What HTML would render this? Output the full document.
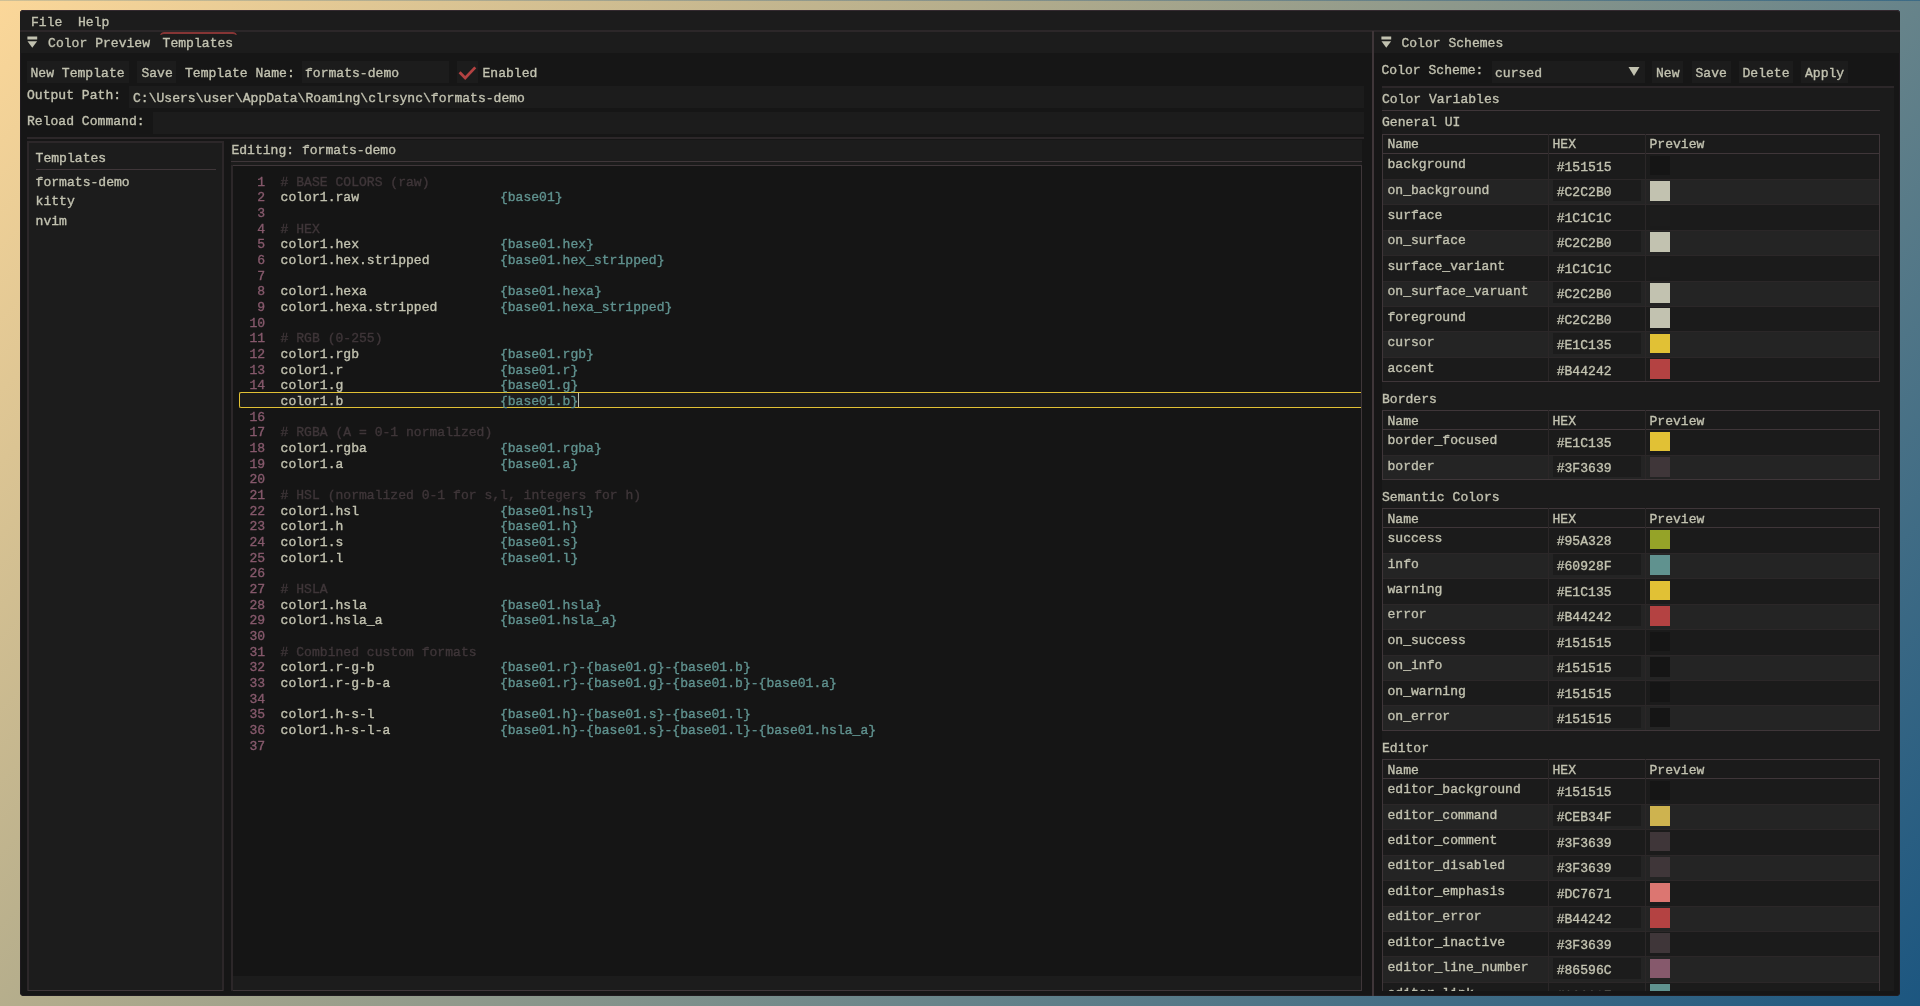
<!DOCTYPE html>
<html><head><meta charset="utf-8"><title>clrsync</title>
<style>
html,body{margin:0;padding:0;width:1920px;height:1006px;overflow:hidden;}
body{position:relative;background:linear-gradient(134deg,#FBD799 0%,#B6AE8C 33.3%,#66838A 66.7%,#1C5680 100%);}
.win{position:absolute;left:20px;top:10px;width:1880px;height:986px;background:#161616;border-radius:4px;box-shadow:inset 0 0 0 1px #1f1b1f;}
.r{position:absolute;}
.clip{position:absolute;overflow:hidden;}
.t{position:absolute;font-family:"Liberation Mono",monospace;font-size:13.07px;line-height:15px;white-space:pre;color:#C2C2B0;transform:scaleY(1.04);-webkit-text-stroke:0.35px currentColor;transform-origin:0 11px;}
</style></head><body>
<div class="r" style="left:0;top:0;width:1920px;height:1px;background:linear-gradient(90deg,#CFC096,#86928A 50%,#3D6B85)"></div>
<div class="win"></div>
<div class="r" style="left:20px;top:10px;width:1880px;height:21px;background:#1C1C1C;border-radius:4px 4px 0 0;box-shadow:inset 0 1px 0 #33292f;"></div>
<div class="t" style="left:31px;top:15px;color:#C2C2B0;">File</div>
<div class="t" style="left:78px;top:15px;color:#C2C2B0;">Help</div>
<div class="r" style="left:20px;top:30px;width:1880px;height:2px;background:#2c2729;"></div>
<div class="r" style="left:20px;top:32px;width:1352px;height:21px;background:#1C1C1C;"></div>
<div class="r" style="left:1374px;top:32px;width:526px;height:21px;background:#1C1C1C;"></div>
<svg class="r" style="left:27px;top:36px" width="12" height="13" viewBox="0 0 12 13"><rect x="0.4" y="0.5" width="9.8" height="3" fill="#C2C2B0"/><path d="M0.5 5.3 L10.1 5.3 L5.3 11.8 Z" fill="#C2C2B0"/></svg>
<div class="t" style="left:48.1px;top:36.2px;color:#C2C2B0;">Color Preview</div>
<div class="t" style="left:162.6px;top:36.2px;color:#C2C2B0;">Templates</div>
<div class="r" style="left:160px;top:32px;width:77px;height:5px;border-top:2px solid #863535;border-radius:4px 4px 0 0;border-left:1px solid #863535;border-right:1px solid #863535;box-sizing:border-box;-webkit-mask:linear-gradient(#000 0 3px, transparent 3px);"></div>
<svg class="r" style="left:1381px;top:36px" width="12" height="13" viewBox="0 0 12 13"><rect x="0.4" y="0.5" width="9.8" height="3" fill="#C2C2B0"/><path d="M0.5 5.3 L10.1 5.3 L5.3 11.8 Z" fill="#C2C2B0"/></svg>
<div class="t" style="left:1401.4px;top:36.2px;color:#C2C2B0;">Color Schemes</div>
<div class="r" style="left:1372px;top:31px;width:2px;height:965px;background:#3F3639;"></div>
<div class="r" style="left:27px;top:61px;width:102px;height:22px;background:#1C1C1C;"></div>
<div class="t" style="left:30.5px;top:66px;color:#C2C2B0;">New Template</div>
<div class="r" style="left:137px;top:61px;width:39px;height:22px;background:#1C1C1C;"></div>
<div class="t" style="left:141.4px;top:66px;color:#C2C2B0;">Save</div>
<div class="t" style="left:185px;top:66px;color:#C2C2B0;">Template Name:</div>
<div class="r" style="left:302px;top:61px;width:147px;height:22px;background:#1C1C1C;"></div>
<div class="t" style="left:305px;top:66px;color:#C2C2B0;">formats-demo</div>
<div class="r" style="left:457px;top:61px;width:21px;height:22px;background:#1C1C1C;"></div>
<svg class="r" style="left:457px;top:61px" width="21" height="21" viewBox="0 0 21 21"><path d="M2.6 11.2 L8.2 16.9 L18.3 6.4" stroke="#B44242" stroke-width="2.8" fill="none" stroke-linecap="butt" stroke-linejoin="miter"/></svg>
<div class="t" style="left:482.5px;top:66px;color:#C2C2B0;">Enabled</div>
<div class="t" style="left:27px;top:88px;color:#C2C2B0;">Output Path:</div>
<div class="r" style="left:129px;top:86px;width:1235px;height:22px;background:#1C1C1C;"></div>
<div class="t" style="left:133px;top:91px;color:#C2C2B0;">C:\Users\user\AppData\Roaming\clrsync\formats-demo</div>
<div class="t" style="left:27px;top:114px;color:#C2C2B0;">Reload Command:</div>
<div class="r" style="left:153px;top:112px;width:1211px;height:22px;background:#1C1C1C;"></div>
<div class="r" style="left:27px;top:137px;width:1337px;height:2px;background:#2c2729;"></div>
<div class="r" style="left:28px;top:141px;width:195px;height:850px;background:#1C1C1C;"></div>
<div class="r" style="left:27px;top:141px;width:2px;height:850px;background:#2c2729;"></div>
<div class="r" style="left:222px;top:141px;width:2px;height:850px;background:#2c2729;"></div>
<div class="r" style="left:28px;top:141px;width:195px;height:2px;background:#2c2729;"></div>
<div class="r" style="left:28px;top:990px;width:195px;height:1px;background:#3F3639;"></div>
<div class="t" style="left:35.6px;top:150.8px;color:#C2C2B0;">Templates</div>
<div class="r" style="left:36px;top:169px;width:180px;height:1px;background:#3F3639;"></div>
<div class="t" style="left:35.6px;top:174.5px;color:#C2C2B0;">formats-demo</div>
<div class="t" style="left:35.6px;top:194px;color:#C2C2B0;">kitty</div>
<div class="t" style="left:35.6px;top:214px;color:#C2C2B0;">nvim</div>
<div class="r" style="left:231px;top:140px;width:1131px;height:851px;background:#1C1C1C;"></div>
<div class="t" style="left:231.4px;top:143px;color:#C2C2B0;">Editing: formats-demo</div>
<div class="r" style="left:231px;top:161px;width:1131px;height:1px;background:#3F3639;"></div>
<div class="r" style="left:231px;top:165px;width:1131px;height:826px;background:#151515;"></div>
<div class="r" style="left:231px;top:165px;width:1131px;height:1px;background:#3F3639;"></div>
<div class="r" style="left:231px;top:990px;width:1131px;height:1px;background:#3F3639;"></div>
<div class="r" style="left:231px;top:165px;width:2px;height:826px;background:#2c2729;"></div>
<div class="r" style="left:1361px;top:165px;width:1px;height:826px;background:#3F3639;"></div>
<div class="r" style="left:233px;top:976px;width:1128px;height:14px;background:#1C1C1C;"></div>
<div class="r" style="left:239px;top:392px;width:1122px;height:16px;border:1px solid #E1C135;border-right:none;border-radius:2px 0 0 2px;background:#1c1c1c;box-sizing:border-box;"></div>
<div class="t" style="left:257.36px;top:174.6px;color:#86596C;">1</div>
<div class="t" style="left:280.6px;top:174.6px;color:#3F3639;"># BASE COLORS (raw)</div>
<div class="t" style="left:257.36px;top:190.27px;color:#86596C;">2</div>
<div class="t" style="left:280.6px;top:190.27px;color:#C2C2B0;">color1.raw</div>
<div class="t" style="left:499.876px;top:190.27px;color:#60928F;">{base01}</div>
<div class="t" style="left:257.36px;top:205.94px;color:#86596C;">3</div>
<div class="t" style="left:257.36px;top:221.61px;color:#86596C;">4</div>
<div class="t" style="left:280.6px;top:221.61px;color:#3F3639;"># HEX</div>
<div class="t" style="left:257.36px;top:237.28px;color:#86596C;">5</div>
<div class="t" style="left:280.6px;top:237.28px;color:#C2C2B0;">color1.hex</div>
<div class="t" style="left:499.876px;top:237.28px;color:#60928F;">{base01.hex}</div>
<div class="t" style="left:257.36px;top:252.95px;color:#86596C;">6</div>
<div class="t" style="left:280.6px;top:252.95px;color:#C2C2B0;">color1.hex.stripped</div>
<div class="t" style="left:499.876px;top:252.95px;color:#60928F;">{base01.hex_stripped}</div>
<div class="t" style="left:257.36px;top:268.62px;color:#86596C;">7</div>
<div class="t" style="left:257.36px;top:284.29px;color:#86596C;">8</div>
<div class="t" style="left:280.6px;top:284.29px;color:#C2C2B0;">color1.hexa</div>
<div class="t" style="left:499.876px;top:284.29px;color:#60928F;">{base01.hexa}</div>
<div class="t" style="left:257.36px;top:299.96px;color:#86596C;">9</div>
<div class="t" style="left:280.6px;top:299.96px;color:#C2C2B0;">color1.hexa.stripped</div>
<div class="t" style="left:499.876px;top:299.96px;color:#60928F;">{base01.hexa_stripped}</div>
<div class="t" style="left:249.52px;top:315.63px;color:#86596C;">10</div>
<div class="t" style="left:249.52px;top:331.3px;color:#86596C;">11</div>
<div class="t" style="left:280.6px;top:331.3px;color:#3F3639;"># RGB (0-255)</div>
<div class="t" style="left:249.52px;top:346.97px;color:#86596C;">12</div>
<div class="t" style="left:280.6px;top:346.97px;color:#C2C2B0;">color1.rgb</div>
<div class="t" style="left:499.876px;top:346.97px;color:#60928F;">{base01.rgb}</div>
<div class="t" style="left:249.52px;top:362.64px;color:#86596C;">13</div>
<div class="t" style="left:280.6px;top:362.64px;color:#C2C2B0;">color1.r</div>
<div class="t" style="left:499.876px;top:362.64px;color:#60928F;">{base01.r}</div>
<div class="t" style="left:249.52px;top:378.31px;color:#86596C;">14</div>
<div class="t" style="left:280.6px;top:378.31px;color:#C2C2B0;">color1.g</div>
<div class="t" style="left:499.876px;top:378.31px;color:#60928F;">{base01.g}</div>
<div class="t" style="left:280.6px;top:393.98px;color:#C2C2B0;">color1.b</div>
<div class="t" style="left:499.876px;top:393.98px;color:#60928F;">{base01.b}</div>
<div class="t" style="left:249.52px;top:409.65px;color:#86596C;">16</div>
<div class="t" style="left:249.52px;top:425.32px;color:#86596C;">17</div>
<div class="t" style="left:280.6px;top:425.32px;color:#3F3639;"># RGBA (A = 0-1 normalized)</div>
<div class="t" style="left:249.52px;top:440.99px;color:#86596C;">18</div>
<div class="t" style="left:280.6px;top:440.99px;color:#C2C2B0;">color1.rgba</div>
<div class="t" style="left:499.876px;top:440.99px;color:#60928F;">{base01.rgba}</div>
<div class="t" style="left:249.52px;top:456.66px;color:#86596C;">19</div>
<div class="t" style="left:280.6px;top:456.66px;color:#C2C2B0;">color1.a</div>
<div class="t" style="left:499.876px;top:456.66px;color:#60928F;">{base01.a}</div>
<div class="t" style="left:249.52px;top:472.33px;color:#86596C;">20</div>
<div class="t" style="left:249.52px;top:488.0px;color:#86596C;">21</div>
<div class="t" style="left:280.6px;top:488.0px;color:#3F3639;"># HSL (normalized 0-1 for s,l, integers for h)</div>
<div class="t" style="left:249.52px;top:503.66999999999996px;color:#86596C;">22</div>
<div class="t" style="left:280.6px;top:503.66999999999996px;color:#C2C2B0;">color1.hsl</div>
<div class="t" style="left:499.876px;top:503.66999999999996px;color:#60928F;">{base01.hsl}</div>
<div class="t" style="left:249.52px;top:519.34px;color:#86596C;">23</div>
<div class="t" style="left:280.6px;top:519.34px;color:#C2C2B0;">color1.h</div>
<div class="t" style="left:499.876px;top:519.34px;color:#60928F;">{base01.h}</div>
<div class="t" style="left:249.52px;top:535.01px;color:#86596C;">24</div>
<div class="t" style="left:280.6px;top:535.01px;color:#C2C2B0;">color1.s</div>
<div class="t" style="left:499.876px;top:535.01px;color:#60928F;">{base01.s}</div>
<div class="t" style="left:249.52px;top:550.68px;color:#86596C;">25</div>
<div class="t" style="left:280.6px;top:550.68px;color:#C2C2B0;">color1.l</div>
<div class="t" style="left:499.876px;top:550.68px;color:#60928F;">{base01.l}</div>
<div class="t" style="left:249.52px;top:566.35px;color:#86596C;">26</div>
<div class="t" style="left:249.52px;top:582.02px;color:#86596C;">27</div>
<div class="t" style="left:280.6px;top:582.02px;color:#3F3639;"># HSLA</div>
<div class="t" style="left:249.52px;top:597.69px;color:#86596C;">28</div>
<div class="t" style="left:280.6px;top:597.69px;color:#C2C2B0;">color1.hsla</div>
<div class="t" style="left:499.876px;top:597.69px;color:#60928F;">{base01.hsla}</div>
<div class="t" style="left:249.52px;top:613.36px;color:#86596C;">29</div>
<div class="t" style="left:280.6px;top:613.36px;color:#C2C2B0;">color1.hsla_a</div>
<div class="t" style="left:499.876px;top:613.36px;color:#60928F;">{base01.hsla_a}</div>
<div class="t" style="left:249.52px;top:629.03px;color:#86596C;">30</div>
<div class="t" style="left:249.52px;top:644.7px;color:#86596C;">31</div>
<div class="t" style="left:280.6px;top:644.7px;color:#3F3639;"># Combined custom formats</div>
<div class="t" style="left:249.52px;top:660.37px;color:#86596C;">32</div>
<div class="t" style="left:280.6px;top:660.37px;color:#C2C2B0;">color1.r-g-b</div>
<div class="t" style="left:499.876px;top:660.37px;color:#60928F;">{base01.r}-{base01.g}-{base01.b}</div>
<div class="t" style="left:249.52px;top:676.04px;color:#86596C;">33</div>
<div class="t" style="left:280.6px;top:676.04px;color:#C2C2B0;">color1.r-g-b-a</div>
<div class="t" style="left:499.876px;top:676.04px;color:#60928F;">{base01.r}-{base01.g}-{base01.b}-{base01.a}</div>
<div class="t" style="left:249.52px;top:691.71px;color:#86596C;">34</div>
<div class="t" style="left:249.52px;top:707.38px;color:#86596C;">35</div>
<div class="t" style="left:280.6px;top:707.38px;color:#C2C2B0;">color1.h-s-l</div>
<div class="t" style="left:499.876px;top:707.38px;color:#60928F;">{base01.h}-{base01.s}-{base01.l}</div>
<div class="t" style="left:249.52px;top:723.05px;color:#86596C;">36</div>
<div class="t" style="left:280.6px;top:723.05px;color:#C2C2B0;">color1.h-s-l-a</div>
<div class="t" style="left:499.876px;top:723.05px;color:#60928F;">{base01.h}-{base01.s}-{base01.l}-{base01.hsla_a}</div>
<div class="t" style="left:249.52px;top:738.72px;color:#86596C;">37</div>
<div class="r" style="left:578px;top:393px;width:1px;height:14px;background:#C2C2B0;"></div>
<div class="t" style="left:1381.5px;top:63px;color:#C2C2B0;">Color Scheme:</div>
<div class="r" style="left:1492px;top:61px;width:153px;height:22px;background:#1C1C1C;"></div>
<div class="t" style="left:1495px;top:66.3px;color:#C2C2B0;">cursed</div>
<svg class="r" style="left:1628px;top:66px" width="12" height="11" viewBox="0 0 12 11"><path d="M0.5 1 L11.5 1 L6 10 Z" fill="#C2C2B0"/></svg>
<div class="r" style="left:1652px;top:61px;width:31px;height:22px;background:#1C1C1C;"></div>
<div class="t" style="left:1656px;top:66.3px;color:#C2C2B0;">New</div>
<div class="r" style="left:1692px;top:61px;width:39px;height:22px;background:#1C1C1C;"></div>
<div class="t" style="left:1695.5px;top:66.3px;color:#C2C2B0;">Save</div>
<div class="r" style="left:1739px;top:61px;width:54px;height:22px;background:#1C1C1C;"></div>
<div class="t" style="left:1742.5px;top:66.3px;color:#C2C2B0;">Delete</div>
<div class="r" style="left:1801px;top:61px;width:47px;height:22px;background:#1C1C1C;"></div>
<div class="t" style="left:1805px;top:66.3px;color:#C2C2B0;">Apply</div>
<div class="r" style="left:1382px;top:86px;width:512px;height:2px;background:#2c2729;"></div>
<div class="r" style="left:1382px;top:88px;width:512px;height:903px;background:#1b1b1b;"></div>
<div class="clip" style="left:1382px;top:88px;width:512px;height:903px;">
<div class="t" style="left:0px;top:4px;color:#C2C2B0;">Color Variables</div>
<div class="r" style="left:0px;top:22px;width:498px;height:1px;background:#3F3639;"></div>
<div class="t" style="left:0px;top:27.4px;color:#C2C2B0;">General UI</div>
<div class="t" style="left:5.5px;top:69.1px;color:#C2C2B0;">background</div>
<div class="t" style="left:174.7px;top:71.9px;color:#C2C2B0;">#151515</div>
<div class="r" style="left:268px;top:67.69999999999999px;width:20px;height:19.6px;background:#151515;"></div>
<div class="r" style="left:1px;top:90.75px;width:496px;height:25.45px;background:#242424;"></div>
<div class="r" style="left:170.5px;top:92.05000000000001px;width:88.5px;height:21px;background:#1C1C1C;"></div>
<div class="r" style="left:1px;top:90.75px;width:496px;height:1px;background:#2b2728;"></div>
<div class="t" style="left:5.5px;top:94.55px;color:#C2C2B0;">on_background</div>
<div class="t" style="left:174.7px;top:97.35px;color:#C2C2B0;">#C2C2B0</div>
<div class="r" style="left:268px;top:93.15px;width:20px;height:19.6px;background:#C2C2B0;"></div>
<div class="r" style="left:1px;top:116.19999999999999px;width:496px;height:1px;background:#2b2728;"></div>
<div class="t" style="left:5.5px;top:120.0px;color:#C2C2B0;">surface</div>
<div class="t" style="left:174.7px;top:122.80000000000001px;color:#C2C2B0;">#1C1C1C</div>
<div class="r" style="left:268px;top:118.6px;width:20px;height:19.6px;background:#1C1C1C;"></div>
<div class="r" style="left:1px;top:141.65px;width:496px;height:25.45px;background:#242424;"></div>
<div class="r" style="left:170.5px;top:142.95px;width:88.5px;height:21px;background:#1C1C1C;"></div>
<div class="r" style="left:1px;top:141.65px;width:496px;height:1px;background:#2b2728;"></div>
<div class="t" style="left:5.5px;top:145.45px;color:#C2C2B0;">on_surface</div>
<div class="t" style="left:174.7px;top:148.25px;color:#C2C2B0;">#C2C2B0</div>
<div class="r" style="left:268px;top:144.05px;width:20px;height:19.6px;background:#C2C2B0;"></div>
<div class="r" style="left:1px;top:167.1px;width:496px;height:1px;background:#2b2728;"></div>
<div class="t" style="left:5.5px;top:170.9px;color:#C2C2B0;">surface_variant</div>
<div class="t" style="left:174.7px;top:173.7px;color:#C2C2B0;">#1C1C1C</div>
<div class="r" style="left:268px;top:169.5px;width:20px;height:19.6px;background:#1C1C1C;"></div>
<div class="r" style="left:1px;top:192.55px;width:496px;height:25.45px;background:#242424;"></div>
<div class="r" style="left:170.5px;top:193.85000000000002px;width:88.5px;height:21px;background:#1C1C1C;"></div>
<div class="r" style="left:1px;top:192.55px;width:496px;height:1px;background:#2b2728;"></div>
<div class="t" style="left:5.5px;top:196.35px;color:#C2C2B0;">on_surface_varuant</div>
<div class="t" style="left:174.7px;top:199.15px;color:#C2C2B0;">#C2C2B0</div>
<div class="r" style="left:268px;top:194.95px;width:20px;height:19.6px;background:#C2C2B0;"></div>
<div class="r" style="left:1px;top:218.0px;width:496px;height:1px;background:#2b2728;"></div>
<div class="t" style="left:5.5px;top:221.8px;color:#C2C2B0;">foreground</div>
<div class="t" style="left:174.7px;top:224.6px;color:#C2C2B0;">#C2C2B0</div>
<div class="r" style="left:268px;top:220.39999999999998px;width:20px;height:19.6px;background:#C2C2B0;"></div>
<div class="r" style="left:1px;top:243.45px;width:496px;height:25.45px;background:#242424;"></div>
<div class="r" style="left:170.5px;top:244.75px;width:88.5px;height:21px;background:#1C1C1C;"></div>
<div class="r" style="left:1px;top:243.45px;width:496px;height:1px;background:#2b2728;"></div>
<div class="t" style="left:5.5px;top:247.25px;color:#C2C2B0;">cursor</div>
<div class="t" style="left:174.7px;top:250.05px;color:#C2C2B0;">#E1C135</div>
<div class="r" style="left:268px;top:245.85000000000002px;width:20px;height:19.6px;background:#E1C135;"></div>
<div class="r" style="left:1px;top:268.9px;width:496px;height:1px;background:#2b2728;"></div>
<div class="t" style="left:5.5px;top:272.7px;color:#C2C2B0;">accent</div>
<div class="t" style="left:174.7px;top:275.5px;color:#C2C2B0;">#B44242</div>
<div class="r" style="left:268px;top:271.3px;width:20px;height:19.6px;background:#B44242;"></div>
<div class="r" style="left:0px;top:46px;width:498px;height:1px;background:#3F3639;"></div>
<div class="r" style="left:0px;top:46px;width:1px;height:248px;background:#3F3639;"></div>
<div class="r" style="left:497px;top:46px;width:1px;height:248px;background:#3F3639;"></div>
<div class="r" style="left:0px;top:293px;width:498px;height:1px;background:#3F3639;"></div>
<div class="r" style="left:0px;top:65.30000000000001px;width:498px;height:1px;background:#3F3639;"></div>
<div class="r" style="left:166px;top:46px;width:1px;height:247px;background:#2b2728;"></div>
<div class="r" style="left:262.5px;top:46px;width:1px;height:247px;background:#2b2728;"></div>
<div class="t" style="left:5.5px;top:49.0px;color:#C2C2B0;">Name</div>
<div class="t" style="left:170.5px;top:49.0px;color:#C2C2B0;">HEX</div>
<div class="t" style="left:267.5px;top:49.0px;color:#C2C2B0;">Preview</div>
<div class="t" style="left:0px;top:304px;color:#C2C2B0;">Borders</div>
<div class="t" style="left:5.5px;top:345.1px;color:#C2C2B0;">border_focused</div>
<div class="t" style="left:174.7px;top:347.9px;color:#C2C2B0;">#E1C135</div>
<div class="r" style="left:268px;top:343.7px;width:20px;height:19.6px;background:#E1C135;"></div>
<div class="r" style="left:1px;top:366.75px;width:496px;height:25.45px;background:#242424;"></div>
<div class="r" style="left:170.5px;top:368.05px;width:88.5px;height:21px;background:#1C1C1C;"></div>
<div class="r" style="left:1px;top:366.75px;width:496px;height:1px;background:#2b2728;"></div>
<div class="t" style="left:5.5px;top:370.55px;color:#C2C2B0;">border</div>
<div class="t" style="left:174.7px;top:373.35px;color:#C2C2B0;">#3F3639</div>
<div class="r" style="left:268px;top:369.15px;width:20px;height:19.6px;background:#3F3639;"></div>
<div class="r" style="left:0px;top:322px;width:498px;height:1px;background:#3F3639;"></div>
<div class="r" style="left:0px;top:322px;width:1px;height:70px;background:#3F3639;"></div>
<div class="r" style="left:497px;top:322px;width:1px;height:70px;background:#3F3639;"></div>
<div class="r" style="left:0px;top:391px;width:498px;height:1px;background:#3F3639;"></div>
<div class="r" style="left:0px;top:341.3px;width:498px;height:1px;background:#3F3639;"></div>
<div class="r" style="left:166px;top:322px;width:1px;height:69px;background:#2b2728;"></div>
<div class="r" style="left:262.5px;top:322px;width:1px;height:69px;background:#2b2728;"></div>
<div class="t" style="left:5.5px;top:325.6px;color:#C2C2B0;">Name</div>
<div class="t" style="left:170.5px;top:325.6px;color:#C2C2B0;">HEX</div>
<div class="t" style="left:267.5px;top:325.6px;color:#C2C2B0;">Preview</div>
<div class="t" style="left:0px;top:402px;color:#C2C2B0;">Semantic Colors</div>
<div class="t" style="left:5.5px;top:443.1px;color:#C2C2B0;">success</div>
<div class="t" style="left:174.7px;top:445.9px;color:#C2C2B0;">#95A328</div>
<div class="r" style="left:268px;top:441.70000000000005px;width:20px;height:19.6px;background:#95A328;"></div>
<div class="r" style="left:1px;top:464.75px;width:496px;height:25.45px;background:#242424;"></div>
<div class="r" style="left:170.5px;top:466.04999999999995px;width:88.5px;height:21px;background:#1C1C1C;"></div>
<div class="r" style="left:1px;top:464.75px;width:496px;height:1px;background:#2b2728;"></div>
<div class="t" style="left:5.5px;top:468.55px;color:#C2C2B0;">info</div>
<div class="t" style="left:174.7px;top:471.35px;color:#C2C2B0;">#60928F</div>
<div class="r" style="left:268px;top:467.15px;width:20px;height:19.6px;background:#60928F;"></div>
<div class="r" style="left:1px;top:490.20000000000005px;width:496px;height:1px;background:#2b2728;"></div>
<div class="t" style="left:5.5px;top:494.0px;color:#C2C2B0;">warning</div>
<div class="t" style="left:174.7px;top:496.8px;color:#C2C2B0;">#E1C135</div>
<div class="r" style="left:268px;top:492.6px;width:20px;height:19.6px;background:#E1C135;"></div>
<div class="r" style="left:1px;top:515.65px;width:496px;height:25.45px;background:#242424;"></div>
<div class="r" style="left:170.5px;top:516.95px;width:88.5px;height:21px;background:#1C1C1C;"></div>
<div class="r" style="left:1px;top:515.65px;width:496px;height:1px;background:#2b2728;"></div>
<div class="t" style="left:5.5px;top:519.45px;color:#C2C2B0;">error</div>
<div class="t" style="left:174.7px;top:522.25px;color:#C2C2B0;">#B44242</div>
<div class="r" style="left:268px;top:518.05px;width:20px;height:19.6px;background:#B44242;"></div>
<div class="r" style="left:1px;top:541.1px;width:496px;height:1px;background:#2b2728;"></div>
<div class="t" style="left:5.5px;top:544.9px;color:#C2C2B0;">on_success</div>
<div class="t" style="left:174.7px;top:547.7px;color:#C2C2B0;">#151515</div>
<div class="r" style="left:268px;top:543.5px;width:20px;height:19.6px;background:#151515;"></div>
<div class="r" style="left:1px;top:566.55px;width:496px;height:25.45px;background:#242424;"></div>
<div class="r" style="left:170.5px;top:567.85px;width:88.5px;height:21px;background:#1C1C1C;"></div>
<div class="r" style="left:1px;top:566.55px;width:496px;height:1px;background:#2b2728;"></div>
<div class="t" style="left:5.5px;top:570.35px;color:#C2C2B0;">on_info</div>
<div class="t" style="left:174.7px;top:573.15px;color:#C2C2B0;">#151515</div>
<div class="r" style="left:268px;top:568.95px;width:20px;height:19.6px;background:#151515;"></div>
<div class="r" style="left:1px;top:592.0px;width:496px;height:1px;background:#2b2728;"></div>
<div class="t" style="left:5.5px;top:595.8px;color:#C2C2B0;">on_warning</div>
<div class="t" style="left:174.7px;top:598.6px;color:#C2C2B0;">#151515</div>
<div class="r" style="left:268px;top:594.4px;width:20px;height:19.6px;background:#151515;"></div>
<div class="r" style="left:1px;top:617.45px;width:496px;height:25.45px;background:#242424;"></div>
<div class="r" style="left:170.5px;top:618.75px;width:88.5px;height:21px;background:#1C1C1C;"></div>
<div class="r" style="left:1px;top:617.45px;width:496px;height:1px;background:#2b2728;"></div>
<div class="t" style="left:5.5px;top:621.25px;color:#C2C2B0;">on_error</div>
<div class="t" style="left:174.7px;top:624.05px;color:#C2C2B0;">#151515</div>
<div class="r" style="left:268px;top:619.85px;width:20px;height:19.6px;background:#151515;"></div>
<div class="r" style="left:0px;top:420px;width:498px;height:1px;background:#3F3639;"></div>
<div class="r" style="left:0px;top:420px;width:1px;height:223px;background:#3F3639;"></div>
<div class="r" style="left:497px;top:420px;width:1px;height:223px;background:#3F3639;"></div>
<div class="r" style="left:0px;top:642px;width:498px;height:1px;background:#3F3639;"></div>
<div class="r" style="left:0px;top:439.29999999999995px;width:498px;height:1px;background:#3F3639;"></div>
<div class="r" style="left:166px;top:420px;width:1px;height:222px;background:#2b2728;"></div>
<div class="r" style="left:262.5px;top:420px;width:1px;height:222px;background:#2b2728;"></div>
<div class="t" style="left:5.5px;top:423.6px;color:#C2C2B0;">Name</div>
<div class="t" style="left:170.5px;top:423.6px;color:#C2C2B0;">HEX</div>
<div class="t" style="left:267.5px;top:423.6px;color:#C2C2B0;">Preview</div>
<div class="t" style="left:0px;top:653px;color:#C2C2B0;">Editor</div>
<div class="t" style="left:5.5px;top:694.1px;color:#C2C2B0;">editor_background</div>
<div class="t" style="left:174.7px;top:696.9px;color:#C2C2B0;">#151515</div>
<div class="r" style="left:268px;top:692.7px;width:20px;height:19.6px;background:#151515;"></div>
<div class="r" style="left:1px;top:715.75px;width:496px;height:25.45px;background:#242424;"></div>
<div class="r" style="left:170.5px;top:717.05px;width:88.5px;height:21px;background:#1C1C1C;"></div>
<div class="r" style="left:1px;top:715.75px;width:496px;height:1px;background:#2b2728;"></div>
<div class="t" style="left:5.5px;top:719.55px;color:#C2C2B0;">editor_command</div>
<div class="t" style="left:174.7px;top:722.35px;color:#C2C2B0;">#CEB34F</div>
<div class="r" style="left:268px;top:718.15px;width:20px;height:19.6px;background:#CEB34F;"></div>
<div class="r" style="left:1px;top:741.2px;width:496px;height:1px;background:#2b2728;"></div>
<div class="t" style="left:5.5px;top:745.0px;color:#C2C2B0;">editor_comment</div>
<div class="t" style="left:174.7px;top:747.8px;color:#C2C2B0;">#3F3639</div>
<div class="r" style="left:268px;top:743.6px;width:20px;height:19.6px;background:#3F3639;"></div>
<div class="r" style="left:1px;top:766.65px;width:496px;height:25.45px;background:#242424;"></div>
<div class="r" style="left:170.5px;top:767.95px;width:88.5px;height:21px;background:#1C1C1C;"></div>
<div class="r" style="left:1px;top:766.65px;width:496px;height:1px;background:#2b2728;"></div>
<div class="t" style="left:5.5px;top:770.45px;color:#C2C2B0;">editor_disabled</div>
<div class="t" style="left:174.7px;top:773.25px;color:#C2C2B0;">#3F3639</div>
<div class="r" style="left:268px;top:769.05px;width:20px;height:19.6px;background:#3F3639;"></div>
<div class="r" style="left:1px;top:792.1px;width:496px;height:1px;background:#2b2728;"></div>
<div class="t" style="left:5.5px;top:795.9px;color:#C2C2B0;">editor_emphasis</div>
<div class="t" style="left:174.7px;top:798.7px;color:#C2C2B0;">#DC7671</div>
<div class="r" style="left:268px;top:794.5px;width:20px;height:19.6px;background:#DC7671;"></div>
<div class="r" style="left:1px;top:817.55px;width:496px;height:25.45px;background:#242424;"></div>
<div class="r" style="left:170.5px;top:818.85px;width:88.5px;height:21px;background:#1C1C1C;"></div>
<div class="r" style="left:1px;top:817.55px;width:496px;height:1px;background:#2b2728;"></div>
<div class="t" style="left:5.5px;top:821.35px;color:#C2C2B0;">editor_error</div>
<div class="t" style="left:174.7px;top:824.15px;color:#C2C2B0;">#B44242</div>
<div class="r" style="left:268px;top:819.95px;width:20px;height:19.6px;background:#B44242;"></div>
<div class="r" style="left:1px;top:843.0px;width:496px;height:1px;background:#2b2728;"></div>
<div class="t" style="left:5.5px;top:846.8px;color:#C2C2B0;">editor_inactive</div>
<div class="t" style="left:174.7px;top:849.6px;color:#C2C2B0;">#3F3639</div>
<div class="r" style="left:268px;top:845.4px;width:20px;height:19.6px;background:#3F3639;"></div>
<div class="r" style="left:1px;top:868.45px;width:496px;height:25.45px;background:#242424;"></div>
<div class="r" style="left:170.5px;top:869.75px;width:88.5px;height:21px;background:#1C1C1C;"></div>
<div class="r" style="left:1px;top:868.45px;width:496px;height:1px;background:#2b2728;"></div>
<div class="t" style="left:5.5px;top:872.25px;color:#C2C2B0;">editor_line_number</div>
<div class="t" style="left:174.7px;top:875.05px;color:#C2C2B0;">#86596C</div>
<div class="r" style="left:268px;top:870.85px;width:20px;height:19.6px;background:#86596C;"></div>
<div class="r" style="left:1px;top:893.9px;width:496px;height:1px;background:#2b2728;"></div>
<div class="t" style="left:5.5px;top:897.7px;color:#C2C2B0;">editor_link</div>
<div class="t" style="left:174.7px;top:900.5px;color:#C2C2B0;">#60928F</div>
<div class="r" style="left:268px;top:896.3px;width:20px;height:19.6px;background:#60928F;"></div>
<div class="r" style="left:1px;top:919.35px;width:496px;height:25.45px;background:#242424;"></div>
<div class="r" style="left:170.5px;top:920.65px;width:88.5px;height:21px;background:#1C1C1C;"></div>
<div class="r" style="left:1px;top:919.35px;width:496px;height:1px;background:#2b2728;"></div>
<div class="t" style="left:5.5px;top:923.15px;color:#C2C2B0;">editor_operator</div>
<div class="t" style="left:174.7px;top:925.95px;color:#C2C2B0;">#C2C2B0</div>
<div class="r" style="left:268px;top:921.75px;width:20px;height:19.6px;background:#C2C2B0;"></div>
<div class="r" style="left:0px;top:671px;width:498px;height:1px;background:#3F3639;"></div>
<div class="r" style="left:0px;top:671px;width:1px;height:274px;background:#3F3639;"></div>
<div class="r" style="left:497px;top:671px;width:1px;height:274px;background:#3F3639;"></div>
<div class="r" style="left:0px;top:944px;width:498px;height:1px;background:#3F3639;"></div>
<div class="r" style="left:0px;top:690.3px;width:498px;height:1px;background:#3F3639;"></div>
<div class="r" style="left:166px;top:671px;width:1px;height:273px;background:#2b2728;"></div>
<div class="r" style="left:262.5px;top:671px;width:1px;height:273px;background:#2b2728;"></div>
<div class="t" style="left:5.5px;top:674.6px;color:#C2C2B0;">Name</div>
<div class="t" style="left:170.5px;top:674.6px;color:#C2C2B0;">HEX</div>
<div class="t" style="left:267.5px;top:674.6px;color:#C2C2B0;">Preview</div>
</div>
</body></html>
